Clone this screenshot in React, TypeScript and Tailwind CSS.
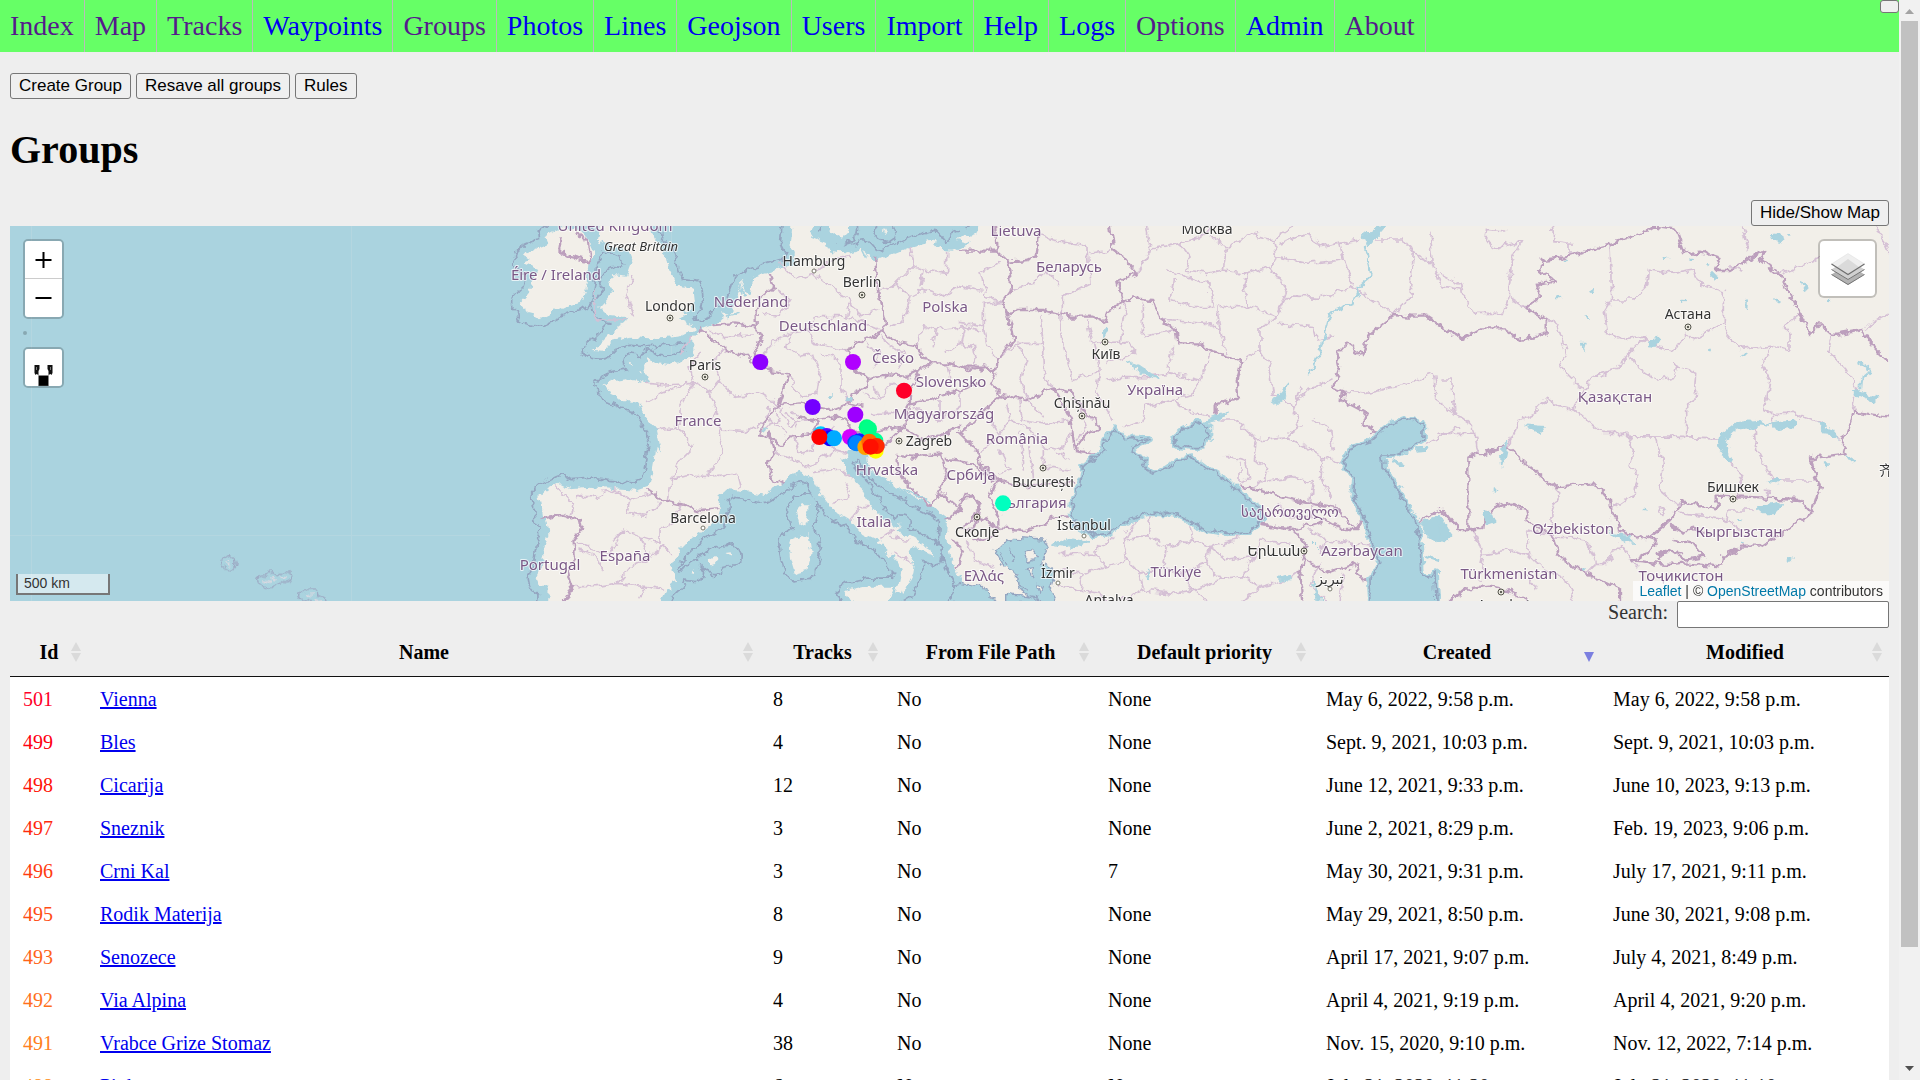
import React from "react";

const NAV = [
  { label: "Index", visited: true },
  { label: "Map", visited: true },
  { label: "Tracks", visited: true },
  { label: "Waypoints", visited: false },
  { label: "Groups", visited: true },
  { label: "Photos", visited: false },
  { label: "Lines", visited: false },
  { label: "Geojson", visited: false },
  { label: "Users", visited: false },
  { label: "Import", visited: false },
  { label: "Help", visited: false },
  { label: "Logs", visited: false },
  { label: "Options", visited: true },
  { label: "Admin", visited: false },
  { label: "About", visited: true },
];

const COLUMNS = [
  { label: "Id", width: "w-[78px]", sorted: false },
  { label: "Name", width: "w-auto", sorted: false },
  { label: "Tracks", width: "w-[125px]", sorted: false },
  { label: "From File Path", width: "w-[211px]", sorted: false },
  { label: "Default priority", width: "w-[217px]", sorted: false },
  { label: "Created", width: "w-[288px]", sorted: true },
  { label: "Modified", width: "w-[288px]", sorted: false },
];

const ROWS = [
  { id: 501, color: "text-[#ff0028]", name: "Vienna", tracks: 8, priority: "None", created: "May 6, 2022, 9:58 p.m.", modified: "May 6, 2022, 9:58 p.m." },
  { id: 499, color: "text-[#ff0010]", name: "Bles", tracks: 4, priority: "None", created: "Sept. 9, 2021, 10:03 p.m.", modified: "Sept. 9, 2021, 10:03 p.m." },
  { id: 498, color: "text-[#ff1408]", name: "Cicarija", tracks: 12, priority: "None", created: "June 12, 2021, 9:33 p.m.", modified: "June 10, 2023, 9:13 p.m." },
  { id: 497, color: "text-[#ff2a0c]", name: "Sneznik", tracks: 3, priority: "None", created: "June 2, 2021, 8:29 p.m.", modified: "Feb. 19, 2023, 9:06 p.m." },
  { id: 496, color: "text-[#ff3c10]", name: "Crni Kal", tracks: 3, priority: "7", created: "May 30, 2021, 9:31 p.m.", modified: "July 17, 2021, 9:11 p.m." },
  { id: 495, color: "text-[#ff4d14]", name: "Rodik Materija", tracks: 8, priority: "None", created: "May 29, 2021, 8:50 p.m.", modified: "June 30, 2021, 9:08 p.m." },
  { id: 493, color: "text-[#ff6418]", name: "Senozece", tracks: 9, priority: "None", created: "April 17, 2021, 9:07 p.m.", modified: "July 4, 2021, 8:49 p.m." },
  { id: 492, color: "text-[#ff701c]", name: "Via Alpina", tracks: 4, priority: "None", created: "April 4, 2021, 9:19 p.m.", modified: "April 4, 2021, 9:20 p.m." },
  { id: 491, color: "text-[#ff8020]", name: "Vrabce Grize Stomaz", tracks: 38, priority: "None", created: "Nov. 15, 2020, 9:10 p.m.", modified: "Nov. 12, 2022, 7:14 p.m." },
  { id: 488, color: "text-[#ff9020]", name: "Pivka", tracks: 6, priority: "None", created: "July 21, 2020, 11:20 p.m.", modified: "July 21, 2020, 11:10 p.m." },
];

const MAINLAND =
  "M200 1200L203 1100L175 1095L170 1070L185 1040L190 1000L205 940L200 905L190 895L185 855L178 830L200 810L240 790L270 805L330 800L400 808L470 812L505 800L520 740L530 680L545 700L530 630L500 590L480 560L470 548L430 540L395 525L385 505L370 495L400 480L440 475L500 490L510 485L495 440L505 415L530 430L570 435L610 420L640 400L640 350L660 330L700 315L730 290L720 280L750 285L775 230L785 180L795 215L812 225L820 170L850 160L900 145L940 135L945 100L930 70L940 -60L1010 -60L1000 20L990 50L1040 70L1050 92L1100 100L1150 85L1185 125L1230 105L1290 80L1360 60L1385 90L1420 92L1470 70L1430 60L1490 40L1500 -60L5800 -60L5800 1200L1540 1200L1500 1143L1455 1110L1440 1070L1420 1030L1400 960L1405 890L1370 865L1320 840L1250 800L1200 770L1165 735L1160 700L1140 690L1100 690L1105 710L1085 720L1110 770L1150 810L1170 850L1210 900L1250 925L1265 910L1250 935L1290 950L1350 985L1362 1012L1340 1000L1300 975L1285 995L1305 1030L1300 1060L1275 1110L1250 1125L1265 1050L1230 1000L1200 970L1150 945L1110 900L1060 870L1020 820L1000 775L960 755L930 765L895 800L850 825L790 810L745 805L715 830L720 870L710 905L640 950L600 990L570 1040L592 1080L560 1110L540 1150L535 1200Z";

const ISLANDS =
  "M375 -60L350 60L385 75L440 90L455 130L440 170L400 165L385 190L400 215L380 240L360 262L385 285L430 290L450 297L420 315L390 345L360 375L335 390L370 392L400 362L450 350L500 355L560 350L610 345L648 325L600 300L620 280L645 250L640 205L590 200L570 160L560 110L520 60L500 -60ZM240 25L200 45L205 72L145 95L132 110L150 120L130 130L175 150L155 185L150 215L120 248L135 262L140 285L180 295L250 260L310 240L320 190L325 130L342 100L320 50L290 25ZM945 870L965 850L985 850L985 880L975 922L955 910ZM925 965L985 940L995 1000L982 1050L945 1060L930 1010ZM680 1022L705 1005L720 1018L705 1038L690 1030ZM738 1002L755 1000L758 1010ZM628 1060L640 1048L645 1062ZM1095 1115L1160 1100L1245 1100L1215 1160L1110 1143ZM1050 -60L1050 30L1085 55L1110 30L1110 -60ZM1205 35L1215 28L1222 42ZM452 425L462 428L458 435ZM478 450L486 452L482 458Z";

const ISLES_WEST =
  "M680 1028L688 1020L690 1034ZM788 1080L808 1082L814 1090ZM812 1074L826 1080ZM846 1072L862 1074ZM914 1124L938 1122L930 1130ZM950 1140L965 1150Z";

const BLACK_SEA =
  "M465 625L490 655L570 658L525 678L512 698L555 722L550 745L580 762L620 748L650 722L700 715L740 745L800 780L850 830L900 865L910 900L870 935L800 940L740 930L690 905L640 880L560 880L500 905L450 940L400 945L350 920L335 880L340 830L362 790L370 740L410 705L435 690L430 670Z";
const AZOV = "M640 655L670 630L720 605L745 620L745 650L730 680L690 680L650 675Z";
const CASPIAN =
  "M1150 730L1165 692L1230 665L1280 620L1330 598L1390 610L1388 660L1350 685L1300 705L1265 705L1270 745L1310 800L1340 860L1372 910L1380 980L1385 1050L1400 1078L1425 1060L1430 1200L1235 1200L1230 1080L1260 1030L1240 970L1210 890L1180 830L1185 780Z";

const COUNTRY_WEST =
  "M190 895L240 885L300 900L305 925L280 960L285 1010L265 1060L275 1100L255 1143M505 810L550 840L610 855L660 870L712 865M660 325L690 350L740 390L800 410L835 440L870 450L925 460L910 510L895 555M700 315L760 310L830 320L830 280L840 230L880 200L870 160M830 320L845 350L820 400L835 440M895 555L850 610L840 650L870 640L900 680L940 650L1000 640L1010 610L960 590M895 555L960 550L1010 560L1060 570L1110 550L1150 560M870 640L880 690L865 740L880 780L905 790M1110 550L1120 520L1160 500L1165 480L1130 450L1100 390L1150 360L1210 335L1215 310L1195 220L1185 110M1210 335L1260 370L1310 380L1350 430L1320 450L1280 470L1210 465L1165 480M1320 450L1290 510L1290 550L1350 540L1440 510L1500 490M1350 430L1400 430L1470 450L1520 440M1010 600L1080 590L1130 640L1200 630L1270 620L1290 550M1270 620L1230 660L1200 690L1150 690M1270 620L1330 660L1400 640L1440 620M1250 705L1300 710L1380 700L1400 760L1370 830L1350 860L1290 800L1250 750Z M1400 720L1480 730L1540 780M1365 830L1385 820L1440 870L1400 900M1440 870L1460 820L1500 850L1480 900L1430 930M1420 960L1450 990L1430 1040M1500 890L1560 930M235 90L270 110L330 125L320 60L290 40M240 90L245 60";

const COUNTRY_MID =
  "M0 92L110 92L145 125L155 210L130 245L145 290L160 360L110 420L105 460M145 125L200 120L230 105L240 40M110 92L105 18M450 18L460 90L490 110L530 160L475 185L490 250L440 280L435 305L400 290L330 290L250 270L170 270L145 285M490 250L510 235L580 240L600 300L650 330L655 370L720 370L760 395L845 425L830 480L835 535L770 550L770 585M0 440L80 440L105 460L90 490L125 525L200 540L280 500L330 515L370 570L410 600L415 630L380 640L345 690L400 700M280 500L330 590L345 690M125 525L60 580L0 640L50 690L60 730L110 780L190 800L260 790L340 788M110 780L90 830L115 890L115 925L200 930L260 910L270 890L335 890M1260 645L1210 610L1220 580L1145 540L1150 510L1120 500L1140 440L1135 400L1160 370L1210 405L1220 350L1300 285L1350 290L1400 290L1460 330L1500 345M840 800L900 810L960 830L1060 850L1120 860L1190 930L1150 930L1100 900L1000 930L910 915M1215 890L1190 930M1000 930L1040 980L1020 1050L1030 1143M1040 1020L1110 1060L1190 1030L1200 1070L1230 1090M1375 905L1410 880L1450 870L1500 930M0 840L40 830L60 870L40 930L0 930M115 925L100 950L40 960";

const COUNTRY_EAST =
  "M0 320L70 355L120 325L190 325L240 360L320 340L320 300L260 265L300 230L290 195L345 185L300 150L305 120L390 110L480 80L600 45L640 20L710 30L735 100L780 95L840 115L825 150L870 150L975 90L960 115L1020 165L1110 345L1140 310L1180 345L1270 330L1300 380L1345 425M1345 590L1240 575L1205 680L1220 700L1110 715L1140 800L1115 880L1080 840L960 835L830 830L830 865L730 845L690 900L620 960L540 935L535 895L515 890L510 840L465 790L340 800L200 680L85 712L85 930M0 870L60 930L130 930L135 880L200 850L255 870L265 910L340 950L360 1010L440 1060L540 1110L540 1143M1115 880L1030 935L960 980L900 980L850 1010L845 1040L740 1030L690 1035L580 1025L620 1000L650 960L620 950M650 1000L690 990L730 1020L790 1010L760 970L700 960M30 1143L70 1110L150 1100L200 1110L260 1140M690 915L740 940L760 920L790 940M655 1020L670 990L720 1000";

const REGION_WEST =
  "M640 350L600 400M640 490L560 495L500 490M640 490L630 440L660 400M640 490L690 515L720 480L700 420L740 390M690 515L710 560L700 600L720 630L800 635L860 600L865 560M640 490L600 560L600 620L530 630M720 630L730 700L680 770L640 765L575 775L565 840M680 770L770 760L780 800M600 620L640 680L600 720L580 770M720 480L760 530L840 520L895 555M500 550L540 520L600 500M690 330L730 350L820 345M870 450L850 400L900 350L930 340L920 380L960 410L1000 400L1020 460L1010 520L960 530L925 460M930 340L990 330L1000 370L1060 380L1100 390M990 330L1010 290L1080 290L1130 300L1200 330M850 280L900 290L930 240L890 210M900 130L950 180L1000 160L1050 200L1110 240L1100 290M1000 160L1050 120L1110 110M1110 240L1140 290L1190 270M1020 400L1080 420L1080 500L1110 550M1190 220L1250 190L1300 140L1290 80M1300 140L1330 150L1400 160L1400 95M1250 190L1290 230L1270 300L1230 320M1290 230L1330 210L1390 230L1440 200L1500 210M1330 150L1320 200M1310 380L1330 320L1370 330L1360 380M1370 330L1450 320L1440 370L1400 400M1450 320L1500 330M1160 370L1200 400L1180 440M1200 350L1270 400L1250 450M1150 520L1200 540L1180 500M1200 540L1240 490L1280 500M1180 580L1250 580M1300 560L1380 600L1380 540M1380 600L1440 560L1440 510M1400 430L1410 480M900 560L930 620L970 600L940 570M870 600L920 640M880 560L900 600L860 620M920 570L950 620M880 690L940 720L990 740L1060 690L1100 700M940 650L960 700L1000 690L1010 640M1060 690L1030 650L1060 620M1000 760L1080 750L1110 770M1060 850L1110 830L1100 790M1110 900L1140 860L1170 860M1200 960L1240 930M1230 950L1280 960M1240 1000L1300 1030M230 800L280 850L270 890M290 830L340 830L400 810L450 840L510 820M450 840L440 880L500 890L540 850M400 960L430 930L480 950L540 970L540 930L580 910L600 855M430 930L390 1000L340 990L290 970M480 950L510 1010L450 1040L410 1090L350 1100L275 1100M510 1010L550 980L570 1000M410 1090L500 1100L550 1110M500 1100L480 1130M300 990L350 1010L370 1050M345 210L350 300L440 300M455 170L440 230L460 290";

const REGION_MID =
  "M240 40L280 60L380 80L390 190L310 230L310 285M390 100L450 90M60 155L120 130M60 155L80 230L125 245M150 210L220 190L260 150L300 200M0 310L70 320L80 370L110 420M70 320L70 250L125 245M0 370L40 380L50 440M110 420L170 370L250 370L240 290M170 370L200 420L180 480L200 540M250 370L255 480L280 500M300 290L310 380L340 480L420 450L400 370L380 300M400 370L500 365L530 400L440 430M440 480L500 470L560 470L620 460L640 380M620 460L680 470L720 480L750 400M720 480L700 520L640 540L560 560L550 600L490 620M640 540L680 570L750 590M500 250L480 370M550 250L550 350L640 330M420 450L410 520L460 600M530 160L570 90L660 70L690 110L680 150L740 160L790 150L800 80L750 50M570 90L560 18M660 70L720 50L760 18M800 80L870 40L940 60L950 110L930 140L860 160L790 150M940 60L1000 18M950 110L1040 130L1150 120L1140 70L1080 80L1050 40L960 70M1140 70L1200 60M1150 120L1180 200L1300 280L1350 230L1360 100L1330 60L1250 60M1360 100L1420 130L1440 200L1500 210M1420 130L1410 40M860 160L850 210L870 260L950 290L980 210L930 140M640 180L630 240L700 260L760 260L750 190L680 170L620 150M770 260L780 330L800 400M600 300L740 310L780 330M870 260L780 260M950 290L900 330L900 390L850 425M960 310L1060 320L1070 360L1120 350M950 290L980 230L1080 235L1180 200M900 390L930 440L940 520L1000 560L1020 620L980 650L890 660L830 600L780 600M1000 560L1040 510L1110 480M1020 500L1000 580M890 660L880 720L920 740L910 780L880 800M980 650L1090 710L1150 730M1090 710L1080 770L1110 830M920 780L1000 770L1060 790L1050 840M800 710L860 720L870 780L840 790L840 730M1120 690L1110 620L1060 600M1150 510L1220 520L1310 500L1420 460L1430 540L1490 580M1400 670L1500 620M140 550L150 600L120 640M180 540L190 600L260 610L330 600M200 540L250 590M150 600L200 620L250 680L310 690L330 640M90 600L120 650L60 690M180 640L190 750M210 680L220 770M250 690L250 740L330 750M120 690L150 750L110 760M290 700L330 720M330 540L360 560L380 620L350 660M350 540L400 600M460 950L400 1000L300 1000M400 1000L440 1040L500 1020L490 960L530 900M490 960L560 950L620 980L610 1040L540 1060L500 1020M620 980L700 960L750 980L740 1030L660 1060L610 1040M560 950L570 890M700 960L690 920M750 980L830 960L830 940M750 980L800 1020L880 1010L900 960L990 970M740 1030L780 1080L700 1110L660 1060M780 1080L850 1070L900 1100L980 1080L1020 1050M850 1070L880 1010M540 1060L550 1110L480 1143M550 1110L640 1120L700 1110L740 1143M300 1050L370 1060L440 1040M370 1060L360 1110L290 1100M360 1110L420 1120L430 1143M850 1143L900 1100M20 960L40 1020L100 1040M1080 1030L1050 1100L1100 1143M1150 1060L1140 1143M1050 930L1100 960L1180 970L1240 980M1100 960L1080 1000M960 850L980 890L1050 890L1060 850";

const REGION_EAST =
  "M205 230L215 120L245 60L160 85L135 50L140 25L200 30M0 160L60 190L70 230L110 280L190 280L205 230L260 265M340 18L345 65L390 70L390 110M510 70L515 240L580 240L620 200L625 150L700 160L760 150L780 190L850 215L850 310L760 360L740 340L700 390L650 380L620 350L570 400L530 450L460 470L430 510L360 440L380 400L350 310L320 300M515 240L490 280L500 340L550 360L620 350M850 310L860 340L900 385L1000 375L1050 390L1050 340L1030 320L1080 280M870 140L900 150M905 18L925 90M1020 165L1080 140L1140 110M570 400L590 440L650 480L700 470L710 440L770 460L765 540L740 555L740 650L850 655M430 510L400 570L490 640L560 640L565 650L740 652M400 570L360 560L320 535L280 580L240 600L200 680M560 640L580 690L570 740L595 770L585 820L515 870M645 655L670 730L660 810L720 860M850 655L860 720L910 770L890 820M1000 375L965 435L990 480L975 570L990 580L1060 580L1140 610L1200 660M1000 580L1000 620M945 620L950 690L1000 780L1130 780M1180 345L1165 390L1220 450L1250 500L1240 575M1345 280L1290 310L1280 330M1310 18L1345 100M340 800L360 820L335 880L340 950M0 480L35 480L45 580L100 620L115 700M0 640L100 640M100 930L130 1010L120 1080M130 1000L210 990L270 1010L260 930L340 950M270 1010L290 1030L380 1080L400 1143M260 1060L290 1110M340 950L440 960L470 1030L500 1030L540 970L570 1010L590 1040M470 1030L440 1060M655 870L665 862L678 870L668 880L655 875M720 880L800 890L860 900L870 870L940 870M860 900L900 930M970 810L985 812L980 830";

const LAKES_MID =
  "M1385 905L1440 885L1470 940L1430 962L1390 940ZM720 612L760 590L810 575L770 600ZM935 550L990 488L970 540ZM500 425L545 440L600 480L540 455ZM432 320L438 320L438 350L432 350ZM0 18L40 35L30 50L0 45ZM1210 50L1250 18L1280 18L1225 80ZM275 975L330 952L390 965L330 985ZM950 1075L990 1062L985 1085ZM1060 970L1080 990L1070 980ZM1060 1085L1085 1143L1070 1143ZM560 1045L566 1080L556 1070Z";

const AEGEAN =
  "M100 985L160 955L250 960L262 985L245 1030L285 1052L270 1100L295 1150L250 1150L180 1110L170 1060L130 1040ZM0 1090L70 1100L110 1150L-40 1150ZM140 1120L230 1130L240 1150L140 1150Z";

const LAKES_EAST =
  "M950 862L1030 848L1000 878L970 878ZM630 360L660 355L645 382L628 380ZM1238 510L1310 535L1300 545L1245 520ZM255 615L315 620L300 640L270 625ZM200 665L185 740L182 700ZM130 880L150 872L162 905L140 912ZM0 900L35 945L15 965L0 960ZM1135 610L1180 625L1195 660L1170 650ZM1220 705L1242 720L1235 725ZM985 780L1025 780L1010 788ZM995 45L1020 42L1025 65L1000 60ZM1085 185L1098 200L1092 212ZM450 215L468 203L458 220ZM428 370L438 370L432 392ZM510 940L570 950L580 970L540 955ZM812 165L830 165L828 180ZM160 810L170 812L160 815ZM1150 735L1166 735L1158 740ZM670 110L680 112L675 118ZM920 255L928 240L926 265Z";

type Label = { text: string; x: number; y: number };

const COUNTRY_LABELS: Label[] = [
  { text: "United Kingdom", x: 605, y: 5 },
  { text: "Éire / Ireland", x: 546, y: 54 },
  { text: "Nederland", x: 741, y: 81 },
  { text: "Deutschland", x: 813, y: 105 },
  { text: "Polska", x: 935, y: 86 },
  { text: "Česko", x: 883, y: 137 },
  { text: "Slovensko", x: 941, y: 161 },
  { text: "France", x: 688, y: 200 },
  { text: "Magyarország", x: 934, y: 193 },
  { text: "Hrvatska", x: 877, y: 249 },
  { text: "Србија", x: 961, y: 254 },
  { text: "Italia", x: 864, y: 301 },
  { text: "España", x: 615, y: 335 },
  { text: "Portugal", x: 540, y: 344 },
  { text: "Ελλάς", x: 974, y: 355 },
  { text: "Lietuva", x: 1006, y: 10 },
  { text: "Беларусь", x: 1059, y: 46 },
  { text: "Україна", x: 1145, y: 169 },
  { text: "România", x: 1007, y: 218 },
  { text: "България", x: 1022, y: 282 },
  { text: "Türkiye", x: 1166, y: 351 },
  { text: "საქართველო", x: 1280, y: 291 },
  { text: "Azərbaycan", x: 1352, y: 330 },
  { text: "Қазақстан", x: 1605, y: 176 },
  { text: "Oʻzbekiston", x: 1563, y: 308 },
  { text: "Кыргызстан", x: 1729, y: 311 },
  { text: "Türkmenistan", x: 1499, y: 353 },
  { text: "Тоҷикистон", x: 1671, y: 355 },
];

const CITY_LABELS: Label[] = [
  { text: "Hamburg", x: 804, y: 40 },
  { text: "Berlin", x: 852, y: 61 },
  { text: "London", x: 660, y: 85 },
  { text: "Paris", x: 695, y: 144 },
  { text: "Zagreb", x: 919, y: 220 },
  { text: "Barcelona", x: 693, y: 297 },
  { text: "Скопје", x: 967, y: 311 },
  { text: "Москва", x: 1197, y: 8 },
  { text: "Київ", x: 1096, y: 133 },
  { text: "Chișinău", x: 1072, y: 182 },
  { text: "București", x: 1033, y: 261 },
  { text: "İstanbul", x: 1074, y: 304 },
  { text: "İzmir", x: 1048, y: 352 },
  { text: "Antalya", x: 1099, y: 379 },
  { text: "Երևան", x: 1264, y: 330 },
  { text: "تبریز", x: 1320, y: 358 },
  { text: "Астана", x: 1678, y: 93 },
  { text: "Бишкек", x: 1723, y: 266 },
  { text: "Aşgabat", x: 1494, y: 384 },
  { text: "齐", x: 1876, y: 249 },
];

const CAPITALS: [number, number][] = [
  [852, 69], [660, 92], [695, 151], [889, 215], [967, 291], [1095, 116], [1072, 190], [1033, 242], [1294, 325], [1678, 101], [1723, 273], [1491, 366],
];
const TOWNS: [number, number][] = [
  [804, 45], [693, 302], [1074, 310], [1048, 357], [1320, 363],
];

const MARKERS: [number, number, string][] = [
  [841, 426, "#8c00ff"],
  [1119, 426, "#b000ff"],
  [1272, 512, "#ff0028"],
  [998, 561, "#7300ff"],
  [1126, 584, "#9d00ff"],
  [1186, 662, "#00ff95"],
  [1160, 622, "#00ff80"],
  [1167, 627, "#00ff88"],
  [1022, 643, "#00c8ff"],
  [1040, 648, "#6400ff"],
  [1050, 655, "#1400ff"],
  [1062, 655, "#00aaff"],
  [1018, 651, "#ff0000"],
  [1110, 651, "#d200ff"],
  [1138, 664, "#1020ff"],
  [1126, 668, "#0050ff"],
  [1130, 670, "#0084ff"],
  [1187, 692, "#ffff00"],
  [1156, 681, "#ffa000"],
  [1168, 665, "#ff6a00"],
  [1190, 678, "#ff2800"],
  [1172, 680, "#ff1000"],
  [1569, 850, "#00ffbf"],
];

function WorldMap() {
  return (
    <svg className="block h-full w-full" viewBox="0 0 1879 375" preserveAspectRatio="xMidYMid slice" role="img" aria-label="Map of tracks">
      <defs>
        <filter id="coast" filterUnits="userSpaceOnUse" x="0" y="0" width="1879" height="375">
          <feTurbulence type="fractalNoise" baseFrequency="0.12" numOctaves={3} seed={4} result="n" />
          <feDisplacementMap in="SourceGraphic" in2="n" scale={9} xChannelSelector="R" yChannelSelector="G" />
        </filter>
      </defs>
      <rect width="1879" height="375" fill="#aad3df" />
      <g stroke="#b4d6e0" strokeWidth="1">
        <path d="M21.500 0V375M341.500 0V375M661.500 0V375M0 309.500H480" />
      </g>
      <g filter="url(#coast)">
        <g transform="translate(-10 -6) scale(0.333333)" fill="none" strokeLinejoin="round" strokeLinecap="round">
          <g transform="translate(1440 0)">
            <path d={MAINLAND + ISLANDS} stroke="#94a5c0" strokeWidth="56" />
            <path d={MAINLAND + ISLANDS} stroke="#aad3df" strokeWidth="46" fill="#aad3df" />
            <path d={MAINLAND + ISLANDS} fill="#f2efe9" />
          </g>
          <path d={ISLES_WEST} stroke="#9daac4" strokeWidth="34" />
          <path d={ISLES_WEST} stroke="#aad3df" strokeWidth="26" />
          <path d={ISLES_WEST} stroke="#e3dbe3" strokeWidth="3" />
          <g stroke="#d5c0d5" strokeWidth="5">
            <path transform="translate(1440 0)" d={REGION_WEST} />
            <path transform="translate(2880 0)" d={REGION_MID} />
            <path transform="translate(4320 0)" d={REGION_EAST} />
          </g>
          <g stroke="#bc9fbd" strokeWidth="7">
            <path transform="translate(1440 0)" d={COUNTRY_WEST} />
            <path transform="translate(2880 0)" d={COUNTRY_MID} />
            <path transform="translate(4320 0)" d={COUNTRY_EAST} />
          </g>
          <g transform="translate(2880 0)">
            <path d={BLACK_SEA + AZOV + CASPIAN} stroke="#aad3df" strokeWidth="18" fill="#aad3df" />
            <path d={BLACK_SEA + AZOV + CASPIAN} stroke="#94a5c0" strokeWidth="5" />
            <path d={AEGEAN} fill="#aad3df" stroke="#94a5c0" strokeWidth="4" />
            <path d="M190 1000L215 985L235 1010L205 1020ZM195 1050L220 1045L215 1070ZM180 1100L200 1110M230 1090L250 1100L240 1120ZM120 1000L140 1030M150 990L160 1020" fill="#f2efe9" stroke="#94a5c0" strokeWidth="4" />
            <path d={LAKES_MID} fill="#aad3df" stroke="#aad3df" strokeWidth="3" />
            <path d="M1215 80L1225 130L1235 170L1200 200L1180 250L1110 280L1095 340L1085 380L1050 460" stroke="#aad3df" strokeWidth="7" />
            <path d="M1300 720L1330 740M1370 690L1400 688M1400 1010L1430 1020" stroke="#aad3df" strokeWidth="10" />
          </g>
          <g transform="translate(4320 0)">
            <path d={LAKES_EAST} fill="#aad3df" stroke="#aad3df" strokeWidth="4" />
            <path d="M845 680L850 650L890 618L950 610M855 690L865 715M1060 610L1010 620" stroke="#aad3df" strokeWidth="22" />
            <path d="M950 608L1020 620M1255 425L1295 450L1260 480L1258 510" stroke="#aad3df" strokeWidth="6" />
            <path d="M1045 46h4M755 120h3M440 290v6M800 130h4M730 240h2M905 405h8M808 390h4M895 898h6M1050 1018h4M905 968h6M612 870h4M1010 240h2M1165 240h2M430 1048h4M350 228h4M375 120h2" stroke="#aad3df" strokeWidth="8" />
          </g>
          <g transform="translate(1440 0)" stroke="#aad3df" strokeWidth="6">
            <path d="M610 270L640 285M780 190L795 230M1130 700L1150 730M1200 780L1300 820L1350 845M1050 525v6M1105 540l8 0M850 628l8 -4M1150 90l10 20M770 280l-30 8" />
          </g>
        </g>
      </g>
      <g fontFamily='"Noto Sans", "DejaVu Sans", sans-serif' fontSize="15" textAnchor="middle" fill="#7a5886" stroke="#ffffff" strokeOpacity="0.7" strokeWidth="2" strokeLinejoin="round" paintOrder="stroke">
        {COUNTRY_LABELS.map((l) => (
          <text key={l.text} x={l.x} y={l.y}>{l.text}</text>
        ))}
      </g>
      <g fontFamily='"Noto Sans", "DejaVu Sans", "Noto Sans CJK SC", sans-serif' fontSize="14" textAnchor="middle" fill="#333333" stroke="#ffffff" strokeOpacity="0.7" strokeWidth="2" strokeLinejoin="round" paintOrder="stroke">
        {CITY_LABELS.map((l) => (
          <text key={l.text} x={l.x} y={l.y}>{l.text}</text>
        ))}
        <text x="631" y="25" fontSize="13" fontStyle="italic">Great Britain</text>
      </g>
      {CAPITALS.map(([x, y]) => (
        <g key={x + "-" + y}>
          <circle cx={x} cy={y} r="3" fill="#e8e6dc" stroke="#55554c" strokeWidth="1" />
          <circle cx={x} cy={y} r="1" fill="#33332c" />
        </g>
      ))}
      {TOWNS.map(([x, y]) => (
        <circle key={x + "-" + y} cx={x} cy={y} r="2" fill="#ffffff" stroke="#77776c" strokeWidth="1" />
      ))}
      <g transform="translate(470 -6) scale(0.333333)">
        {MARKERS.map(([x, y, color]) => (
          <circle key={x + "-" + y} cx={x} cy={y} r="24" fill={color} />
        ))}
      </g>
    </svg>
  );
}

function LayersIcon() {
  return (
    <svg className="h-8 w-[34px]" viewBox="0 0 34 32" aria-hidden="true">
      <path d="M0.500 21.500L17 11L33.500 21.500L17 32Z" fill="#b3b3b3" />
      <path d="M0.500 21.500L17 31.500L33.500 21.500" fill="none" stroke="#747474" strokeWidth="1" />
      <path d="M0.500 16.500L17 6L33.500 16.500L17 27Z" fill="#d0d0d0" />
      <path d="M0.500 16.500L17 26.500L33.500 16.500" fill="none" stroke="#747474" strokeWidth="1" />
      <path d="M0.500 11L17 0.500L33.500 11L17 21.500Z" fill="#efefef" stroke="#dddddd" strokeWidth="0.500" />
      <path d="M6 14L17 6L28 14L17 21Z" fill="#dadada" />
      <path d="M0.500 11L17 21.500L33.500 11" fill="none" stroke="#6e6e6e" strokeWidth="1.200" />
    </svg>
  );
}

function SortIcon({ active }: { active: boolean }) {
  return (
    <svg className="absolute right-[6px] top-1/2 h-5 w-3 -translate-y-1/2" viewBox="0 0 12 20" aria-hidden="true">
      {active ? (
        <path d="M1 10H11L6 20Z" fill="#7b7fe0" />
      ) : (
        <>
          <path d="M1 9L6 0L11 9Z" fill="#dadada" />
          <path d="M1 11L6 20L11 11Z" fill="#dadada" />
        </>
      )}
    </svg>
  );
}

function Button({ children }: { children: React.ReactNode }) {
  return (
    <button type="button" className="flex h-[26px] items-center rounded-[3px] border border-[#767676] bg-[#efefef] px-2 font-['Liberation_Sans',Arial,sans-serif] text-[17px] leading-[20px] text-black">
      {children}
    </button>
  );
}

export default function App() {
  return (
    <div className="flex h-screen overflow-hidden bg-[#eeeeee] font-['Liberation_Serif','Times_New_Roman',serif] text-[20px] leading-[23px] text-black">
      <main className="relative h-full min-w-0 flex-1 overflow-hidden">
        <nav className="flex h-[52px] bg-[#66ff66]">
          {NAV.map((item) => (
            <a
              key={item.label}
              href="#"
              className={
                "border-r border-[#bbbbbb] px-[10px] py-[10px] text-[28px] leading-[32px] " +
                (item.visited ? "text-[#551a8b]" : "text-[#0000ee]")
              }
            >
              {item.label}
            </a>
          ))}
        </nav>
        <button type="button" aria-label="Toggle menu" className="absolute right-0 top-0 h-[13px] w-[19px] rounded-[3px] border border-[#767676] bg-[#efefef]" />

        <div className="px-[10px]">
          <div className="mt-[21px] flex gap-[5px]">
            <Button>Create Group</Button>
            <Button>Resave all groups</Button>
            <Button>Rules</Button>
          </div>
          <h1 className="mt-[28px] text-[40px] font-bold leading-[46px]">Groups</h1>
          <div className="mt-[27px] flex justify-end">
            <Button>Hide/Show Map</Button>
          </div>

          <section className="relative h-[375px] overflow-hidden font-['Liberation_Sans',Arial,sans-serif]" aria-label="Map">
            <WorldMap />
            <div className="absolute left-[13px] top-[13px] flex flex-col items-start gap-3">
              <div className="rounded-[5px] border-2 border-black/20">
                <button type="button" aria-label="Zoom in" className="flex h-[38px] w-[37px] items-center justify-center rounded-t-[3px] border-b border-[#cccccc] bg-white">
                  <svg className="h-4 w-[17px]" viewBox="0 0 17 16" aria-hidden="true"><path d="M0.500 8H16.500M8.500 0V16" stroke="#000" strokeWidth="2" /></svg>
                </button>
                <button type="button" aria-label="Zoom out" className="flex h-[38px] w-[37px] items-center justify-center rounded-b-[3px] bg-white">
                  <svg className="h-4 w-[17px]" viewBox="0 0 17 16" aria-hidden="true"><path d="M0.500 8H16.500" stroke="#000" strokeWidth="2" /></svg>
                </button>
              </div>
              <div className="h-1 w-1 rounded-full bg-black/20" />
              <div className="rounded-[5px] border-2 border-black/20">
                <button type="button" aria-label="Fullscreen" className="flex h-[37px] w-[37px] items-end justify-center rounded-[3px] bg-white">
                  <svg className="h-[21px] w-[19px]" viewBox="0 0 19 21" aria-hidden="true">
                    <path d="M0.500 0h5v4l-1 2v4l-2-1l-1 1l-1-2zM18.500 0h-5v4l1 2v4l2-1l1 1l1-2z" fill="#111" />
                    <path d="M4.500 10.500H14.500V21H4.500Z" fill="#000" stroke="#888" strokeWidth="0.500" />
                    <path d="M2.500 2v3M16.500 2v3" stroke="#777" strokeWidth="1" />
                  </svg>
                </button>
              </div>
            </div>
            <button type="button" aria-label="Layers" className="absolute right-3 top-[13px] flex h-[59px] w-[59px] items-center justify-center rounded-[6px] border-2 border-black/20 bg-white bg-clip-padding">
              <LayersIcon />
            </button>
            <div className="absolute bottom-[6px] left-[6px] h-[21px] w-[94px] border-2 border-t-0 border-[#777777] bg-white/50 px-[6px] text-[14px] leading-[18px] text-[#333333]">500 km</div>
            <div className="absolute bottom-0 right-0 bg-white/70 px-[6px] text-[14px] leading-[20px] text-[#333333]">
              <a href="#" className="text-[#0078a8]">Leaflet</a> | © <a href="#" className="text-[#0078a8]">OpenStreetMap</a> contributors
            </div>
          </section>

          <div className="flex h-[27px] justify-end gap-[9px] text-[#333333]">
            <label htmlFor="search">Search:</label>
            <input id="search" type="search" className="h-[27px] w-[212px] rounded-[2px] border border-[#767676] bg-white px-1 text-black" />
          </div>

          <table className="w-full table-fixed border-separate border-spacing-0">
            <thead>
              <tr>
                {COLUMNS.map((c) => (
                  <th key={c.label} scope="col" className={"relative h-[49px] border-b border-[#111111] p-0 text-center font-bold " + c.width}>
                    {c.label}
                    <SortIcon active={c.sorted} />
                  </th>
                ))}
              </tr>
            </thead>
            <tbody className="bg-white">
              {ROWS.map((r) => (
                <tr key={r.id}>
                  <td className={"px-[13px] pt-[11px] pb-[9px] " + r.color}>{r.id}</td>
                  <td className="px-3 pt-[11px] pb-[9px]"><a href="#" className="text-[#0000ee] underline">{r.name}</a></td>
                  <td className="px-[13px] pt-[11px] pb-[9px]">{r.tracks}</td>
                  <td className="px-3 pt-[11px] pb-[9px]">No</td>
                  <td className="px-3 pt-[11px] pb-[9px]">{r.priority}</td>
                  <td className="px-[13px] pt-[11px] pb-[9px]">{r.created}</td>
                  <td className="px-3 pt-[11px] pb-[9px]">{r.modified}</td>
                </tr>
              ))}
            </tbody>
          </table>
        </div>
      </main>

      <div className="flex h-full w-[21px] shrink-0 flex-col items-center bg-[#f1f1f1]" aria-hidden="true">
        <svg className="h-[21px] w-[21px] shrink-0" viewBox="0 0 21 21"><path d="M6 14L10.500 9L15 14Z" fill="#a3a3a3" /></svg>
        <div className="w-[17px] flex-[926_1_0%] bg-[#c1c1c1]" />
        <div className="flex-[112_1_0%]" />
        <svg className="h-[21px] w-[21px] shrink-0" viewBox="0 0 21 21"><path d="M6 7L10.500 12L15 7Z" fill="#505050" /></svg>
      </div>
    </div>
  );
}
